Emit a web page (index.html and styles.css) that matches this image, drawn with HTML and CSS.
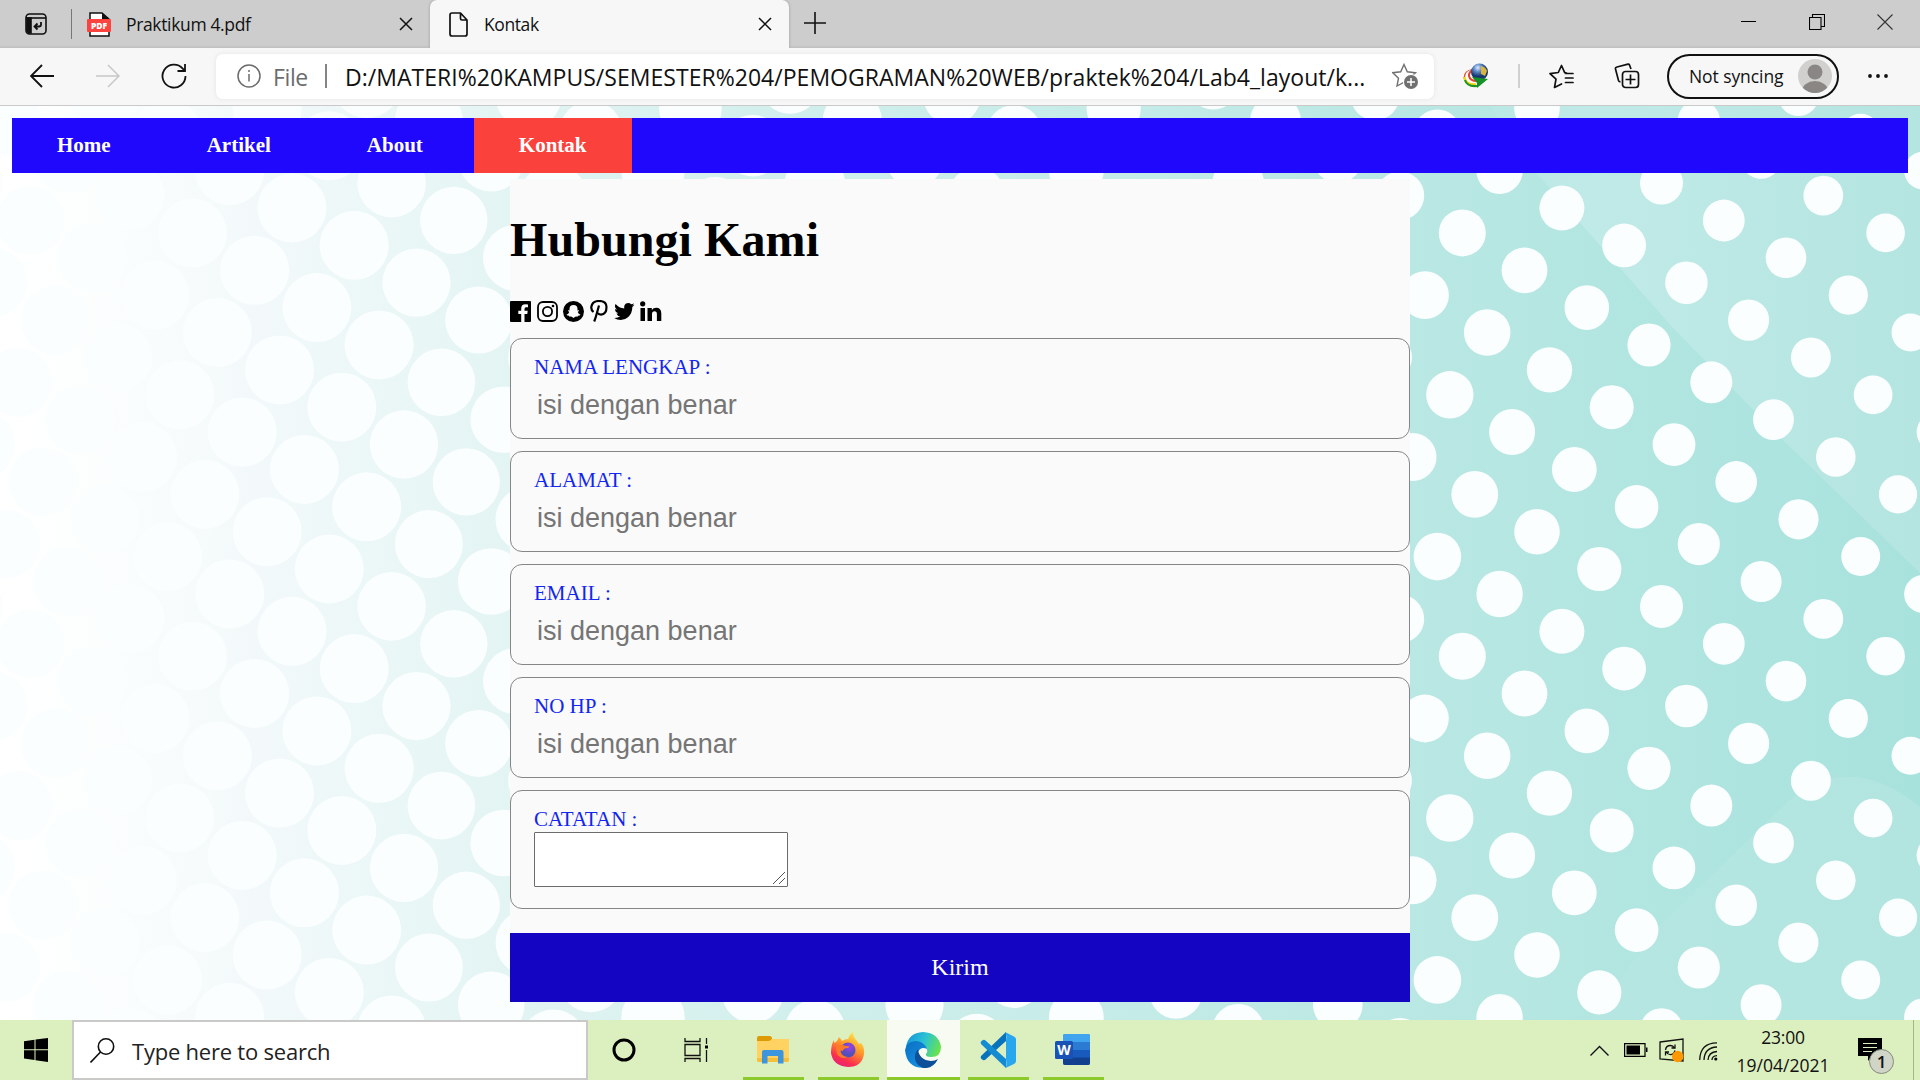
FILE: index.html
```html
<!DOCTYPE html>
<html lang="id">
<head>
<meta charset="utf-8">
<title>Kontak</title>
<link rel="stylesheet" href="styles.css">
</head>
<body>
<div class="screen">
  <header class="tabstrip">
    <svg class="tab-actions" width="22" height="22" viewBox="0 0 22 22" fill="none" stroke="#111" stroke-width="1.6"><rect x="1" y="1" width="20" height="20" rx="3.5"/><path d="M1 5H21" /><path d="M2 5h4v15H3.500L2 18z" fill="#111"/><path d="M16 9v2.500q0 2-2 2H9.500M12.500 10.500l-3 3 3 3" stroke-width="1.800"/></svg>
    <span class="tab-sep"></span>
    <div class="tab">
      <svg width="24" height="25" viewBox="0 0 24 25"><path d="M3 1H15L22 7V24H3Z" fill="#fff" stroke="#111" stroke-width="1.500"/><path d="M15 1V7H22Z" fill="#111"/><rect y="7" width="24" height="13" rx="1" fill="#fb4340"/><text x="12" y="16.600" text-anchor="middle" class="pdf-text">PDF</text></svg>
      <span class="tab-title tab-title-pdf">Praktikum 4.pdf</span>
      <svg class="tab-close" width="14" height="14" viewBox="0 0 14 14" stroke="#111" stroke-width="1.500"><path d="M1 1L13 13M13 1L1 13"/></svg>
    </div>
    <div class="tab tab-active">
      <svg width="20" height="25" viewBox="0 0 20 25" fill="none" stroke="#111" stroke-width="1.700" stroke-linejoin="round"><path d="M3 1H11.500L18 8V22Q18 24 16 24H3Q1 24 1 22V3Q1 1 3 1ZM11.500 1V6.500Q11.500 8 13 8H18"/></svg>
      <span class="tab-title tab-title-kontak">Kontak</span>
      <svg class="tab-close" width="14" height="14" viewBox="0 0 14 14" stroke="#111" stroke-width="1.500"><path d="M1 1L13 13M13 1L1 13"/></svg>
    </div>
    <svg class="new-tab" width="22" height="22" viewBox="0 0 22 22" stroke="#111" stroke-width="1.600"><path d="M0 11H22M11 0V22"/></svg>
    <div class="window-buttons">
      <svg width="16" height="16" viewBox="0 0 16 16" stroke="#000"><path d="M0 7.500H15"/></svg>
      <svg width="16" height="16" viewBox="0 0 16 16" fill="none" stroke="#000" stroke-width="1.100"><path d="M.5 3.500H12V15.500H.5ZM3.500 3.500V.5H15.500V12.500H12"/></svg>
      <svg width="16" height="16" viewBox="0 0 16 16" stroke="#333" stroke-width="1.100"><path d="M.5 .5L15.500 15.500M15.500 .5L.5 15.500"/></svg>
    </div>
  </header>

  <div class="toolbar">
    <svg class="nav-icon" width="24" height="24" viewBox="0 0 24 24" fill="none" stroke="#111" stroke-width="1.800"><path d="M24 12H1M12 1L1 12L12 23"/></svg>
    <svg class="nav-icon" width="24" height="24" viewBox="0 0 24 24" fill="none" stroke="#c8c8c8" stroke-width="1.500"><path d="M0 12H23M12 1L23 12L12 23"/></svg>
    <svg class="nav-icon" width="26" height="26" viewBox="0 0 26 26" fill="none" stroke="#111" stroke-width="1.800"><path d="M24.500 13A11.500 11.500 0 1 1 21.500 5.300L24 8M24 1V8H16.500"/></svg>
    <div class="address">
      <svg width="24" height="24" viewBox="0 0 24 24" fill="none" stroke="#6c6c6c" stroke-width="1.500"><circle cx="12" cy="12" r="11"/><path d="M12 10V17.500M12 6V8"/></svg>
      <span class="scheme">File</span>
      <span class="scheme-sep"></span>
      <span class="url">D:/MATERI%20KAMPUS/SEMESTER%204/PEMOGRAMAN%20WEB/praktek%204/Lab4_layout/k...</span>
      <svg class="star-add" width="27" height="26" viewBox="0 0 27 26"><path d="M12 1.500L15.300 8.800L23.500 9.700L17.500 15L19 23L12 19.200L5 23L6.500 15.200L.8 9.700L8.700 8.800Z" fill="none" stroke="#707070" stroke-width="1.400"/><circle cx="19" cy="19" r="8" fill="#fff"/><circle cx="19" cy="19" r="7" fill="#707070"/><path d="M19 15V23M15 19H23" stroke="#fff" stroke-width="1.500"/></svg>
    </div>
    <svg class="idm" width="26" height="26" viewBox="0 0 26 26"><defs><radialGradient id="globe" cx=".4" cy=".25"><stop offset="0" stop-color="#dceaff"/><stop offset=".5" stop-color="#5b86c4"/><stop offset="1" stop-color="#17376f"/></radialGradient></defs><g fill="none"><path d="M10 7Q1.500 8 1.500 15Q3 22 12 21" stroke="#e2452d" stroke-width="2"/><path d="M10 8Q3.500 9 3.500 14.500Q5 20 13 19.500" stroke="#fff" stroke-width="3"/><path d="M11 6Q5.500 9 6 13Q7 18 14 18" stroke="#e2452d" stroke-width="2"/><path d="M1.500 14Q2 22 13 21.500" stroke="#f1d813" stroke-width="2.500"/><path d="M2 17Q4 24 14 23" stroke="#209427" stroke-width="2"/></g><circle cx="16.500" cy="9" r="8.500" fill="url(#globe)"/><path d="M18 3Q23 4 24 8L22 13L18 11Z" fill="#d9b53e"/><path d="M9 14L25 16L14 25L14 20Z" fill="#169126"/></svg>
    <span class="tool-sep"></span>
    <svg class="favorites" width="25" height="25" viewBox="0 0 25 25" fill="none" stroke="#111" stroke-width="1.700" stroke-linejoin="round" stroke-linecap="round"><path d="M17.500 9L15.700 8.600L12.500 1.500L9.300 8.500L1 9.700L7 15.200L5.500 23.500L12.500 20M16.500 9.500H24M16.500 14H24M16.500 18.500H24"/></svg>
    <svg class="collections" width="26" height="26" viewBox="0 0 26 26" fill="none" stroke="#111" stroke-width="1.700"><path d="M17 6L15.500 2Q15 1 14 1.200L3 4Q1 4.500 1.500 6L4.500 17.500Q5 19 6.500 18.500"/><rect x="8.500" y="8.500" width="16" height="16" rx="3"/><path d="M16.500 11.500V21.500M11.500 16.500H21.500"/></svg>
    <div class="profile"><span>Not syncing</span>
      <svg width="34" height="34" viewBox="0 0 34 34"><defs><clipPath id="face"><circle cx="17" cy="17" r="17"/></clipPath></defs><g clip-path="url(#face)"><rect width="34" height="34" fill="#d2d0ce"/><circle cx="17" cy="13" r="7.500" fill="#8a8683"/><ellipse cx="17" cy="32" rx="13" ry="10" fill="#8a8683"/></g></svg>
    </div>
    <svg class="more" width="22" height="6" viewBox="0 0 22 6" fill="#111"><circle cx="3" cy="3" r="1.900"/><circle cx="11" cy="3" r="1.900"/><circle cx="19" cy="3" r="1.900"/></svg>
  </div>

  <main class="page">
    <svg class="backdrop" width="1920" height="914" viewBox="0 106 1920 914">
      <defs>
        <linearGradient id="sea"><stop offset="0" stop-color="#fff"/><stop offset=".05" stop-color="#fcfefe"/><stop offset=".13" stop-color="#f3f9fa"/><stop offset=".2" stop-color="#ebf7f7"/><stop offset=".27" stop-color="#e2f4f3"/><stop offset=".42" stop-color="#d0efec"/><stop offset=".73" stop-color="#bae8e4"/><stop offset=".87" stop-color="#b0e5e0"/><stop offset="1" stop-color="#a8e2dd"/></linearGradient>
        <linearGradient id="light"><stop offset="0" stop-color="#bae8e4"/><stop offset=".25" stop-color="#c0eae7"/><stop offset="1" stop-color="#b4e5e1"/></linearGradient>
        <linearGradient id="dune"><stop offset="0" stop-color="#b5e6e2"/><stop offset="1" stop-color="#b2e5e0"/></linearGradient>
      </defs>
      <rect y="106" width="1920" height="914" fill="url(#sea)"/>
      <path d="M1490 106L1538 175L1672 327L1787 444L1920 573V106Z" fill="url(#light)"/>
      <path d="M1590 1020L1660 925L1790 800Q1850 750 1920 807V1020Z" fill="url(#dune)"/>
      <g id="dots" fill="#fbfefe"></g>
    </svg>
    <nav class="menu">
      <a>Home</a><a>Artikel</a><a>About</a><a class="current">Kontak</a>
    </nav>
    <section class="contact">
      <h1>Hubungi Kami</h1>
      <div class="social">
        <svg width="21" height="22" viewBox="0 0 21 22"><path fill-rule="evenodd" d="M1 1H20Q21 1 21 2V21Q21 22 20 22H14.500V14H17.300L17.700 10.700H14.500V9Q14.500 7.300 16 7.300H18V4.400Q16.500 4.200 15.500 4.200Q11.200 4.200 11.200 8.500V10.700H8.300V14H11.200V22H1Q0 22 0 21V2Q0 1 1 1Z"/></svg>
        <svg width="21" height="22" viewBox="0 0 21 22" fill="none" stroke="#000" stroke-width="1.800"><rect x="1" y="2" width="19" height="19" rx="5"/><circle cx="10.500" cy="11.500" r="4.600"/><circle cx="16" cy="6" r="1.300" fill="#000" stroke="none"/></svg>
        <svg width="21" height="22" viewBox="0 0 21 22"><circle cx="10.500" cy="11.500" r="10.500"/><path fill="#fafafa" d="M10.500 5Q14.500 5 14.500 9V10.500L16 10.300Q16.500 11 14.700 12Q15.500 14 17.500 14.700Q17 15.600 15 15.700L14.500 16.700Q12.700 16.300 10.500 18Q8.300 16.300 6.500 16.700L6 15.700Q4 15.600 3.500 14.700Q5.500 14 6.300 12Q4.500 11 5 10.300L6.500 10.500V9Q6.500 5 10.500 5Z"/></svg>
        <svg width="18" height="22" viewBox="0 0 18 22" fill="none" stroke="#000" stroke-width="2.200"><path d="M3.500 12Q1 10 1.300 7Q2.200 1.100 8.900 1Q16.400 1 16.500 7Q16.500 14.300 11 14.600Q8.500 14.500 7.800 12.800"/><path d="M9 5.500L5.500 18L4.200 21.500"/></svg>
        <svg width="21" height="22" viewBox="0 0 21 22"><path d="M20.500 4.800Q19.500 6.200 18.300 7Q18.400 13 14.300 17Q11 20 6.800 20Q3 20 .2 18.100Q3.700 18.300 6.300 16.300Q3.300 16 2.400 13.400Q3.500 13.500 4.300 13.200Q1 12.200 1 9Q2 9.600 2.900 9.600Q-.2 7 1.600 4Q5 8.200 10.300 8.400Q9.600 4.900 12 3.500Q15 2 17.200 4.300Q18.700 4 19.900 3.200Q19.500 4.800 18.100 5.600Q19.400 5.400 20.500 4.800Z"/></svg>
        <svg width="22" height="22" viewBox="0 0 22 22"><circle cx="2.700" cy="3.800" r="2.600"/><path d="M.5 8H5V21H.5ZM7.500 8H11.800V9.900Q13.300 7.700 16.200 7.700Q21.300 7.700 21.300 13.500V21H16.900V14Q16.900 11.200 14.500 11.200Q12 11.200 12 14V21H7.500Z"/></svg>
      </div>
      <form>
        <div class="field"><label>NAMA LENGKAP :</label><input type="text" placeholder="isi dengan benar"></div>
        <div class="field"><label>ALAMAT :</label><input type="text" placeholder="isi dengan benar"></div>
        <div class="field"><label>EMAIL :</label><input type="text" placeholder="isi dengan benar"></div>
        <div class="field"><label>NO HP :</label><input type="text" placeholder="isi dengan benar"></div>
        <div class="field field-note"><label>CATATAN :</label>
          <div class="note"><textarea></textarea><svg class="grip" width="14" height="14" viewBox="0 0 14 14" stroke="#555"><path d="M1 13L13 1M7 13L13 7"/></svg></div>
        </div>
        <button type="button">Kirim</button>
      </form>
    </section>
  </main>

  <footer class="taskbar">
    <div class="start"><svg width="24" height="24" viewBox="0 0 24 24"><path d="M0 3.300L10.500 1.800V11.300H0ZM11.500 1.600L24 0V11.300H11.500ZM0 12.300H10.500V22L0 20.600ZM11.500 12.300H24V24L11.500 22.200Z"/></svg></div>
    <div class="search"><svg width="25" height="25" viewBox="0 0 25 25" fill="none" stroke="#111" stroke-width="1.600"><circle cx="16" cy="8.500" r="7.700"/><path d="M10.500 14L.5 24.500"/></svg><span>Type here to search</span></div>
    <div class="sys"><svg width="24" height="24" viewBox="0 0 24 24" fill="none" stroke="#000" stroke-width="3"><circle cx="12" cy="12" r="10"/></svg></div>
    <div class="sys"><svg width="25" height="25" viewBox="0 0 25 25" fill="none" stroke="#111" stroke-width="1.300"><path d="M1 0V3.500H16V0M1 6.500H16V17.500H1ZM1 24V20.500H16V24M22.500 0V6M22.500 12V24"/><rect x="21" y="7.500" width="3" height="3" fill="#000" stroke="none"/></svg></div>
    <div class="app app-files"><svg width="32" height="29" viewBox="0 0 32 29"><path d="M0 3H32V24Q32 26 30 26H2Q0 26 0 24Z" fill="#ffd262"/><path d="M0 2Q0 0 2 0H12.500Q15 0 15 2.500Q14 5 11 5H0Z" fill="#dd9a05"/><path d="M15 0H32V3H15Z" fill="#dcefbf"/><path d="M0 22H32V24Q32 26 30 26H2Q0 26 0 24Z" fill="#f7bf38"/><path d="M5 27.500V16Q5 14 7 14H24.500Q26.500 14 26.500 16V27.500H21V20H10.500V27.500Z" fill="#3d95dd"/></svg></div>
    <div class="app"><svg width="34" height="36" viewBox="0 0 34 36"><defs><linearGradient id="fire" x1=".8" y1="0" x2=".3" y2="1"><stop offset="0" stop-color="#fff04b"/><stop offset=".45" stop-color="#ff9528"/><stop offset=".8" stop-color="#fa2f4f"/><stop offset="1" stop-color="#e81f7b"/></linearGradient><radialGradient id="core" cx=".6" cy=".3"><stop offset="0" stop-color="#a23fed"/><stop offset="1" stop-color="#5350b9"/></radialGradient></defs><path d="M3 8Q3 10 3.500 11L6 9L8 5Q10 7 11 9Q14 7 17 7Q18 3 22 0Q22 5 26 9L28 12L30 11Q34 16 33 22Q31 35 17 35Q2 34 0 21Q0 13 3 8Z" fill="url(#fire)"/><circle cx="17" cy="18" r="7.500" fill="url(#core)"/><path d="M5 14Q10 12 15 14Q20 14 17 16Q12 16 12 19Q10 19 9 18Q10 25 17 25Q10 28 6 22Z" fill="#ff7a28"/></svg></div>
    <div class="app app-open"><svg width="36" height="36" viewBox="0 0 36 36"><defs><linearGradient id="wave" x1="0" y1=".3" x2="1" y2=".6"><stop offset="0" stop-color="#1697dc"/><stop offset=".5" stop-color="#2bc3d2"/><stop offset="1" stop-color="#6be449"/></linearGradient><linearGradient id="deep" x1="0" y1="0" x2=".7" y2="1"><stop offset="0" stop-color="#0b6fc4"/><stop offset="1" stop-color="#1591df"/></linearGradient></defs><path d="M1 15Q3 1 18 0Q34 1 36 15Q36 25 26 25Q20 25 21 22Q23 20 22 17Q18 9 1 15Z" fill="url(#wave)"/><path d="M0 18Q1 10 10 9Q19 9 22 17Q16 14 13 20Q10 30 22 35.500Q2 38 0 18Z" fill="url(#deep)"/><path d="M13 17Q14 28 26 29Q30 29 33 27Q28 37 18 36Q7 31 11 20Z" fill="#0d4f99"/></svg></div>
    <div class="app"><svg width="36" height="36" viewBox="0 0 36 36"><path d="M1 24Q0 26 1.500 27L3 28Q4.500 28.600 5.500 27.500L26 9V0Z" fill="#0873bd"/><path d="M1 12Q0 10 1.500 9L3 8Q4.500 7.400 5.500 8.500L26 27V36Z" fill="#138bd2"/><path d="M25 0L34 4.500Q36 5.500 36 7V29Q36 31 34 32L25.500 36Q27 34 26 27V9Q27 3 25 0Z" fill="#28a7ef"/></svg></div>
    <div class="app"><svg width="36" height="34" viewBox="0 0 36 34"><rect x="8" y="1" width="27" height="31" rx="2" fill="#2b7bd3"/><path d="M8 3Q8 1 10 1H33Q35 1 35 3V9H8Z" fill="#41a4ee"/><rect x="8" y="17" width="27" height="8" fill="#185abd"/><path d="M8 24.500H35V30Q35 32 33 32H10Q8 32 8 30Z" fill="#12408f"/><rect x="0" y="8" width="18" height="18" rx="1.500" fill="#1852b7"/><text x="9" y="22" text-anchor="middle" class="word-text">W</text></svg></div>
    <div class="tray">
      <svg class="chevron" width="19" height="11" viewBox="0 0 19 11" fill="none" stroke="#111" stroke-width="1.400"><path d="M.5 10.500L9.500 1.500L18.500 10.500"/></svg>
      <svg class="battery" width="24" height="14" viewBox="0 0 24 14"><path d="M.6 .6H21V13.400H.6Z" fill="none" stroke="#000" stroke-width="1.200"/><path d="M2.500 2.500H16V11.500H2.500ZM22 4.500H23.500V9H22Z"/></svg>
      <svg class="update" width="25" height="25" viewBox="0 0 25 25" fill="none" stroke="#111" stroke-width="1.300"><path d="M1 4L24 1V23L1 21Z"/><path d="M6.500 12Q7 7.500 11.500 7.500Q14 7.500 15.500 10M16 6.500V10H12.500M16 12.500Q15 16.500 11.500 16.700Q8.500 16.500 7 14M6.500 17.500V14H10"/><circle cx="18.700" cy="18.500" r="5.700" fill="#ff9800" stroke="none"/></svg>
      <svg class="wifi" width="19" height="19" viewBox="0 0 19 19" fill="none" stroke="#111" stroke-width="1.300"><path d="M.7 18Q1 1 18 .8M5 18Q5.500 5.500 18 5M9 18Q9.500 10 18 9.500M13 18Q13 14 18 13.700"/><circle cx="16.800" cy="17" r="1.600" fill="#000" stroke="none"/></svg>
      <div class="clock"><span class="time">23:00</span><span class="date">19/04/2021</span></div>
      <svg class="notice" width="37" height="37" viewBox="0 0 37 37"><path d="M0 0H24V18H14L10 23V18H0Z"/><path d="M5 5.500H19M5 9.500H19M5 13.500H14" stroke="#dcefbf" stroke-width="1.200"/><circle cx="23.500" cy="23.500" r="12" fill="#d1d5c8" stroke="#858b7c"/><text x="23.500" y="30" text-anchor="middle" class="count">1</text></svg>
      <span class="peek"></span>
    </div>
  </footer>
</div>
<script src="dots.js"></script>
</body>
</html>
```
FILE: styles.css
```css
* { box-sizing: border-box; }
body { margin: 0; font-family: "Open Sans", "Noto Sans", sans-serif; color: #111; }
svg { display: block; flex: none; }
.screen { width: 1920px; height: 1080px; overflow: hidden; display: flex; flex-direction: column; }

/* tab strip */
.tabstrip { height: 48px; flex: none; display: flex; align-items: center; background: linear-gradient(#cdcdcd 45px, #bfbfbf 48px); }
.tab-actions { margin-left: 25px; }
.tab-sep { width: 1px; height: 30px; margin-left: 24px; background: #777; }
.tab { height: 48px; width: 358px; padding: 0 17px 0 15px; display: flex; align-items: center; }
.tab-active { width: 359px; padding-left: 19px; background: #f7f7f7; border-radius: 7px 7px 0 0; box-shadow: 0 0 3px #999; clip-path: inset(0 -4px 0 -4px); }
.tab-title { font-size: 17.5px; line-height: 24px; margin: 0 0 1px 15px; white-space: nowrap; }
.tab-title-pdf { letter-spacing: -.35px; }
.tab-title-kontak { letter-spacing: -.4px; }
.tab-close { margin-left: auto; }
.new-tab { margin-left: 15px; margin-top: -2px; }
.window-buttons { margin-left: auto; margin-right: 27px; margin-top: -5px; display: flex; gap: 52px; }
.pdf-text { font: 800 8.5px "Open Sans", sans-serif; fill: #fff; }

/* toolbar */
.toolbar { height: 58px; flex: none; display: flex; align-items: center; padding-bottom: 1px; background: #f7f7f7; border-bottom: 1px solid #c9c9c9; }
.nav-icon:nth-child(1) { margin-left: 30px; }
.nav-icon:nth-child(2) { margin-left: 42px; }
.nav-icon:nth-child(3) { margin-left: 41px; }
.address { width: 1218px; height: 45px; margin-left: 29px; padding-left: 21px; display: flex; align-items: center; background: #fff; border-radius: 7px; box-shadow: 0 0 5px #e4e4e4; }
.scheme { width: 38px; margin-left: 12px; padding-top: 2px; font-size: 23px; letter-spacing: -.4px; line-height: 32px; color: #6c6c6c; }
.scheme-sep { width: 2px; height: 24px; margin-left: 14px; background: #858585; }
.url { width: 1020px; margin-left: 18px; padding-top: 2px; font-size: 23px; line-height: 32px; letter-spacing: .03px; white-space: nowrap; }
.star-add { margin-left: 27px; }
.idm { margin-left: 29px; }
.tool-sep { width: 2px; height: 24px; margin-left: 29px; background: #d0d0d0; }
.favorites { margin-left: 29px; }
.collections { margin-left: 40px; }
.profile { width: 172px; height: 45px; margin-left: 27px; padding: 0 5px 0 20px; display: flex; align-items: center; justify-content: space-between; border: 2px solid #111; border-radius: 23px; font-size: 17.5px; letter-spacing: -.08px; white-space: nowrap; }
.more { margin-left: 28px; }

/* web page */
.page { position: relative; height: 914px; flex: none; padding: 12px 12px 0; font-family: "Liberation Serif", serif; overflow: hidden; }
.backdrop { position: absolute; left: 0; top: 0; z-index: -1; }
.menu { height: 55px; display: flex; gap: 6px; background: #1f08fb; }
.menu a { padding: 0 45px; font-size: 21px; font-weight: bold; line-height: 55px; color: #fff; }
.menu .current { background: #fb413c; }
.contact { width: 900px; margin: 6px auto 0; padding-top: 33px; background: #fafafa; color: #000; }
h1 { margin: 0; font-size: 48px; line-height: 56px; letter-spacing: .08px; }
.social { height: 22px; margin: 32px 0 16px; display: flex; gap: 5.700px; }
.field { height: 101px; margin-bottom: 12px; padding: 16px 23px 0; border: 1px solid #868686; border-radius: 12px; }
.field label { display: block; font-size: 21px; line-height: 24px; color: #1226f0; }
.field input { display: block; width: 100%; height: 31px; margin-top: 11px; padding: 0 3px; border: 0; background: none; font: 27px/31px "Liberation Sans", sans-serif; }
.field input::placeholder { color: #757575; }
.field-note { height: 119px; margin-bottom: 24px; }
.note { position: relative; width: 254px; height: 55px; margin-top: 1px; }
.note textarea { display: block; width: 254px; height: 55px; resize: none; border: 1px solid #6c6c6c; border-radius: 1px; background: #fff; }
.grip { position: absolute; right: 2px; bottom: 2px; }
button { display: block; width: 900px; height: 69px; padding: 0; border: 0; background: #1405c2; color: #fff; font: 24px "Liberation Serif", serif; }

/* taskbar */
.taskbar { height: 60px; flex: none; display: flex; background: #dcefbf; }
.start { width: 72px; display: flex; align-items: center; justify-content: center; }
.search { width: 516px; border: 2px solid #c9cac8; background: #fff; padding-left: 16px; display: flex; align-items: center; gap: 17px; font-size: 22px; color: #222; white-space: nowrap; letter-spacing: -.22px; }
.search span { padding-top: 2px; }
.sys { width: 72px; display: flex; align-items: center; justify-content: center; }
.app { width: 61px; margin-right: 14px; padding-right: 2px; border-bottom: 3px solid #8cca2b; display: flex; align-items: center; justify-content: center; }
.app svg { margin-top: 3px; }
.app-files { margin-left: 11px; }
.app-open { width: 73px; margin: 0 8px 0 -6px; background: #f8fbf2; }
.tray { margin-left: auto; display: flex; align-items: center; }
.battery { margin-left: 15px; }
.update { margin-left: 11px; }
.wifi { margin-left: 15px; margin-top: 2px; }
.clock { width: 92px; margin-left: 19px; padding-top: 1px; display: flex; flex-direction: column; align-items: center; font-size: 17.5px; line-height: 28px; white-space: nowrap; }
.time { letter-spacing: -.2px; }
.date { letter-spacing: 0; }
.notice { margin-left: 29px; margin-top: 12px; }
.peek { width: 1px; height: 60px; margin: 0 6px 0 18px; background: #a5b38f; }
.word-text { font: bold 14px "Open Sans", sans-serif; fill: #fff; }
.count { font: 600 17px "Open Sans", sans-serif; fill: #111; }
```
FILE: dots.js
```js
// Halftone backdrop: a rotated square lattice whose dots shrink towards the right.
const dots = document.getElementById('dots');
const stepX = 62.25, stepY = 37.35, originX = 1462.3, originY = 232.9;
for (let m = -40; m <= 40; m++) {
  for (let n = -40; n <= 40; n++) {
    const x = originX + m * stepX - n * stepY;
    const y = originY + m * stepY + n * stepX;
    if (x < -40 || x > 1960 || y < 66 || y > 1060) continue;
    const dot = document.createElementNS('http://www.w3.org/2000/svg', 'circle');
    dot.setAttribute('cx', x.toFixed(1));
    dot.setAttribute('cy', y.toFixed(1));
    dot.setAttribute('r', Math.min(34.5, 38.3 - 0.0101 * x).toFixed(1));
    dots.appendChild(dot);
  }
}
```
